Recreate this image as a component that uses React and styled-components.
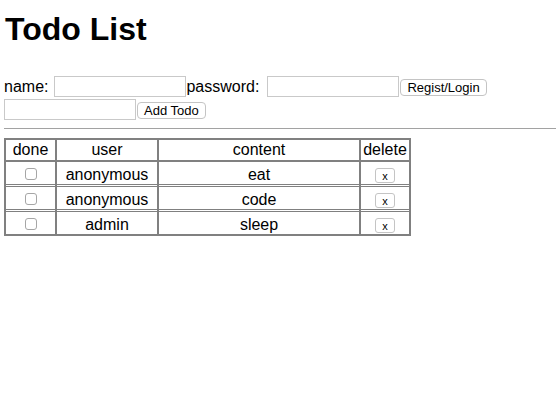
import { createGlobalStyle, styled } from "styled-components";

const GlobalStyle = createGlobalStyle`
  body {
    margin: 4px;
    font-family: "Liberation Sans", Arial, Helvetica, sans-serif;
    color: #000;
    background: #fff;
  }
`;

const Title = styled.h1`
  font-size: 32px;
  font-weight: bold;
  margin: 7px 0 0 1px;
  line-height: 37px;
`;

const Form = styled.div`
  margin-top: 27px;
`;

const Row = styled.div`
  display: flex;
  align-items: center;
  height: 23px;
`;

const Label = styled.span`
  font-size: 16px;
  margin-right: ${(p) => p.$gap || 6}px;
`;

const Input = styled.input`
  box-sizing: border-box;
  width: 132px;
  height: 21px;
  margin: 0;
  padding: 1px 3px;
  border: 1px solid #c9c9c9;
  font-size: 13px;
  font-family: inherit;
`;

const Button = styled.button`
  box-sizing: border-box;
  height: 17px;
  margin: 0 0 0 1px;
  padding: 0 6px;
  font-family: "Liberation Sans", Arial, sans-serif;
  font-size: 13px;
  line-height: 15px;
  color: #000;
  background: #fff;
  border: 1px solid #c4c4c4;
  border-radius: 4px;
  margin-top: ${(p) => p.$offset || 0}px;
`;

const Rule = styled.hr`
  margin: 7px -4px 0 0;
  border: 0;
  border-top: 1px solid #a2a2a2;
  height: 0;
`;

const Table = styled.table`
  margin-top: 9px;
  width: 407px;
  table-layout: fixed;
  border-collapse: separate;
  border-spacing: 0;
  border: 1px solid #808080;
  font-size: 16px;
`;

const Head = styled.th`
  width: ${(p) => p.$w}px;
  box-sizing: border-box;
  font-weight: normal;
  padding: 1px;
  line-height: 18px;
  border: 1px solid #808080;
`;

const BodyRow = styled.tr`
  & + & td {
    border-top: 3px double #808080;
  }
  &:not(:last-child) td {
    border-bottom-width: 0;
  }
`;

const Cell = styled.td`
  text-align: center;
  padding: 3px 1px 0;
  line-height: 19px;
  border: 1px solid #808080;
`;

const Check = styled.input`
  appearance: none;
  box-sizing: border-box;
  width: 12px;
  height: 12px;
  margin: 3px 0 0;
  border: 1px solid #a6a6a6;
  border-radius: 3px;
  background: #fff;
  vertical-align: top;
`;

const DeleteButton = styled.button`
  box-sizing: border-box;
  width: 20px;
  height: 15px;
  margin-top: 3px;
  padding: 0;
  font-family: "Liberation Sans", Arial, sans-serif;
  font-size: 11px;
  line-height: 12px;
  color: #000;
  background: #fff;
  border: 1px solid #c4c4c4;
  border-radius: 3px;
  vertical-align: top;
`;

const todos = [
  { user: "anonymous", content: "eat" },
  { user: "anonymous", content: "code" },
  { user: "admin", content: "sleep" },
];

const App = () => {
  return (
    <>
      <GlobalStyle />
      <Title>Todo List</Title>
      <Form>
        <Row>
          <Label $gap={6}>name:</Label>
          <Input />
          <Label $gap={8}>password:</Label>
          <Input type="password" />
          <Button $offset={2}>Regist/Login</Button>
        </Row>
        <Row>
          <Input />
          <Button $offset={2}>Add Todo</Button>
        </Row>
      </Form>
      <Rule />
      <Table>
        <thead>
          <tr>
            <Head $w={51}>done</Head>
            <Head $w={102}>user</Head>
            <Head $w={202}>content</Head>
            <Head $w={50}>delete</Head>
          </tr>
        </thead>
        <tbody>
          {todos.map((todo, i) => (
            <BodyRow key={i}>
              <Cell>
                <Check type="checkbox" />
              </Cell>
              <Cell>{todo.user}</Cell>
              <Cell>{todo.content}</Cell>
              <Cell>
                <DeleteButton>x</DeleteButton>
              </Cell>
            </BodyRow>
          ))}
        </tbody>
      </Table>
    </>
  );
};

export default App;
